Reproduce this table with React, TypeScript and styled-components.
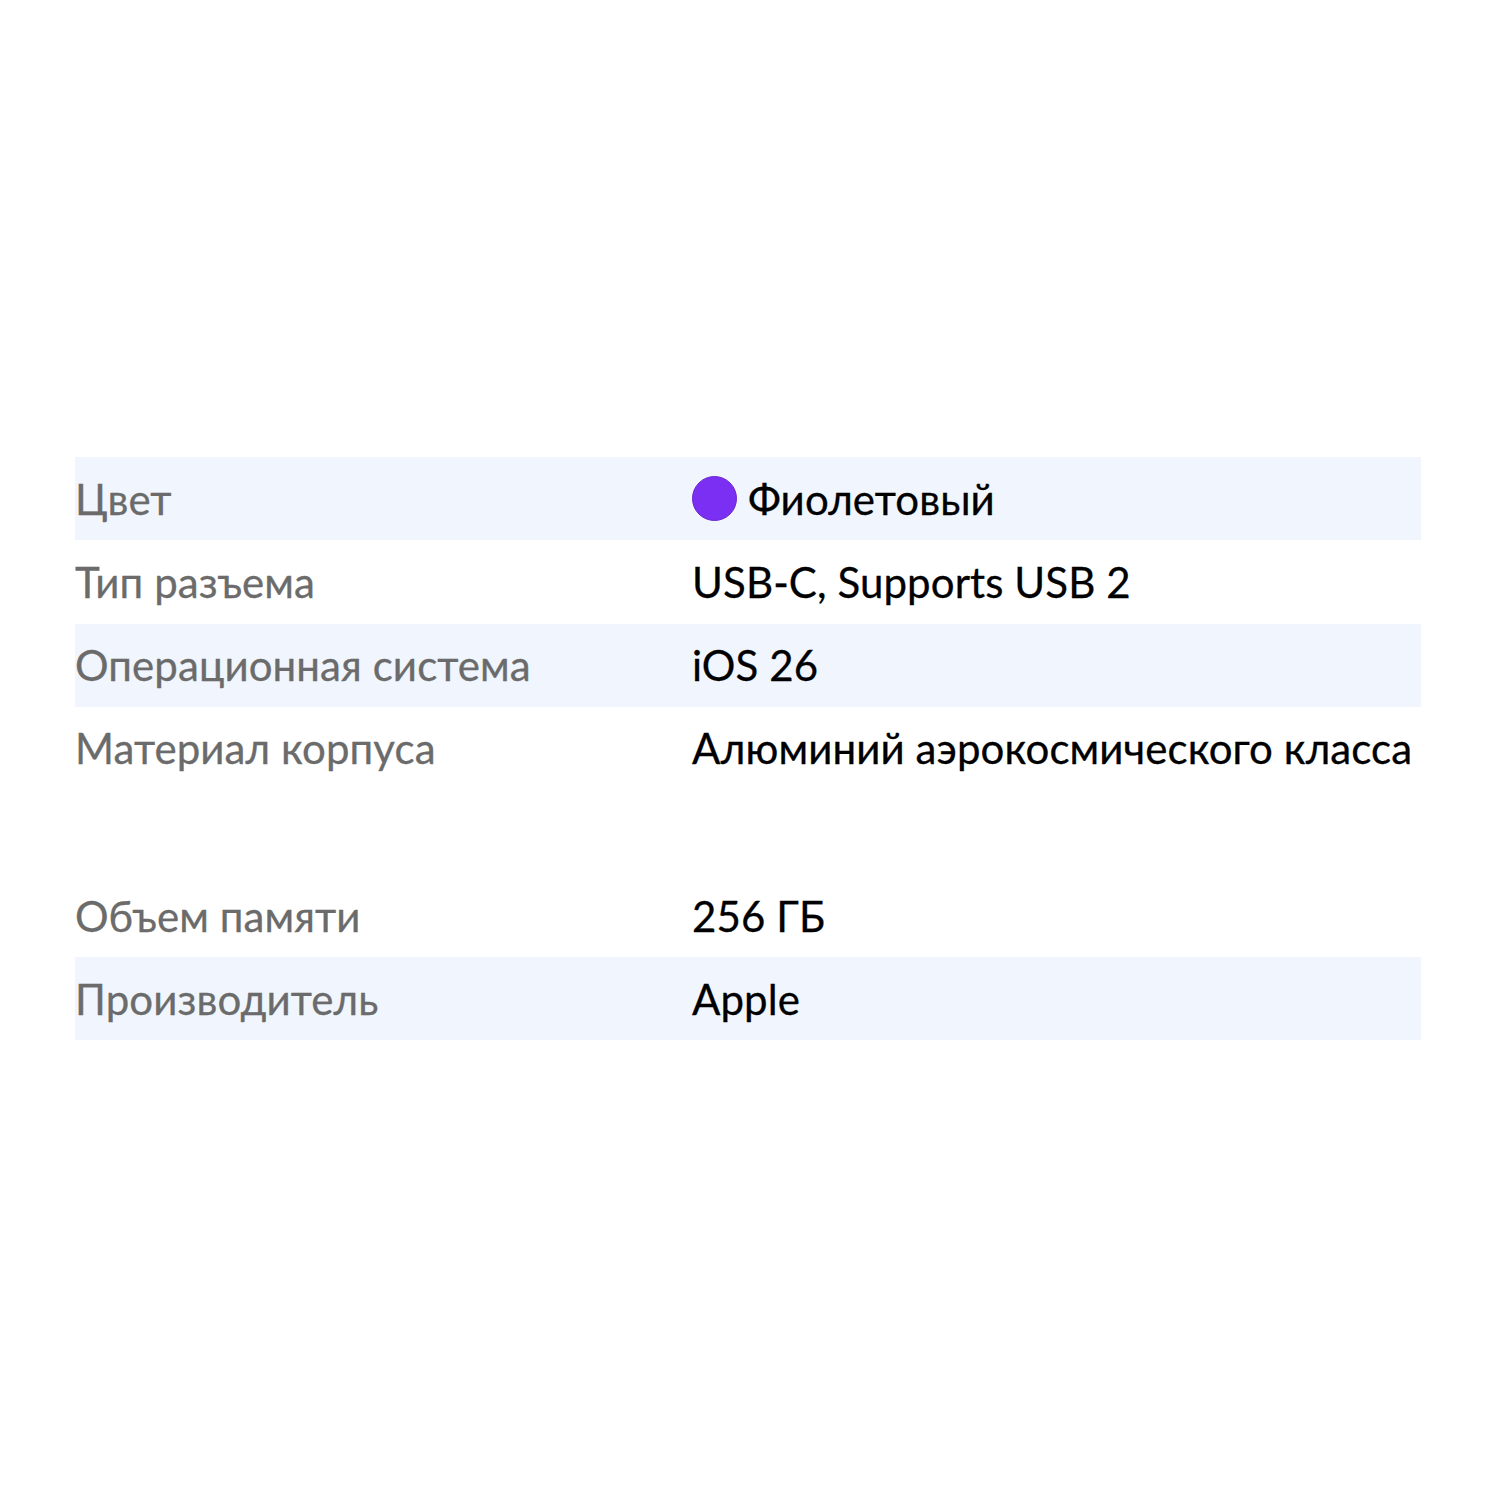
import React from 'react';
import styled, { createGlobalStyle } from 'styled-components';

interface Spec {
  label: string;
  value: string;
  swatch?: string;
  shaded?: boolean;
  tall?: boolean;
}

const specs: Spec[] = [
  { label: 'Цвет', value: 'Фиолетовый', swatch: '#7b2ff2', shaded: true },
  { label: 'Тип разъема', value: 'USB-C, Supports USB 2' },
  { label: 'Операционная система', value: 'iOS 26', shaded: true },
  { label: 'Материал корпуса', value: 'Алюминий аэрокосмического класса', tall: true },
  { label: 'Объем памяти', value: '256 ГБ' },
  { label: 'Производитель', value: 'Apple', shaded: true },
];

const App: React.FC = () => {
  return (
    <>
      <GlobalStyle />
      <Page>
        <SpecTable>
          {specs.map(spec => (
            <Row key={spec.label} shaded={spec.shaded} tall={spec.tall}>
              <Label>{spec.label}</Label>
              <Value>
                {spec.swatch && <Swatch color={spec.swatch} />}
                {spec.value}
              </Value>
            </Row>
          ))}
        </SpecTable>
      </Page>
    </>
  );
};

const GlobalStyle = createGlobalStyle`
  html, body {
    margin: 0;
    padding: 0;
    background: #ffffff;
  }
  body {
    font-family: Lato, "Noto Sans", sans-serif;
  }
`;

const Page = styled.div`
  width: 1500px;
  height: 1500px;
  box-sizing: border-box;
  padding: 457px 79px 0 75px;
`;

const SpecTable = styled.div`
  display: flex;
  flex-direction: column;
  width: 1346px;
`;

const Row = styled.div<{ shaded?: boolean; tall?: boolean }>`
  display: grid;
  grid-template-columns: 617px 1fr;
  align-items: ${({ tall }) => (tall ? 'start' : 'center')};
  height: ${({ tall }) => (tall ? '167px' : '83.3px')};
  padding-top: ${({ tall }) => (tall ? '19px' : '0')};
  box-sizing: border-box;
  background-color: ${({ shaded }) => (shaded ? '#f1f6fe' : 'transparent')};
  font-size: 42px;
  line-height: 44px;
  letter-spacing: 0.1px;
`;

const Label = styled.span`
  color: #6b6b6b;
  white-space: nowrap;
  -webkit-text-stroke: 0.3px #6b6b6b;
`;

const Value = styled.span`
  display: flex;
  align-items: center;
  gap: 11px;
  color: #000000;
  white-space: nowrap;
  -webkit-text-stroke: 0.3px #000000;
`;

const Swatch = styled.span<{ color: string }>`
  width: 43px;
  height: 43px;
  border-radius: 50%;
  background-color: ${({ color }) => color};
  border: 1px solid #6a25cf;
  flex-shrink: 0;
`;

export default App;
